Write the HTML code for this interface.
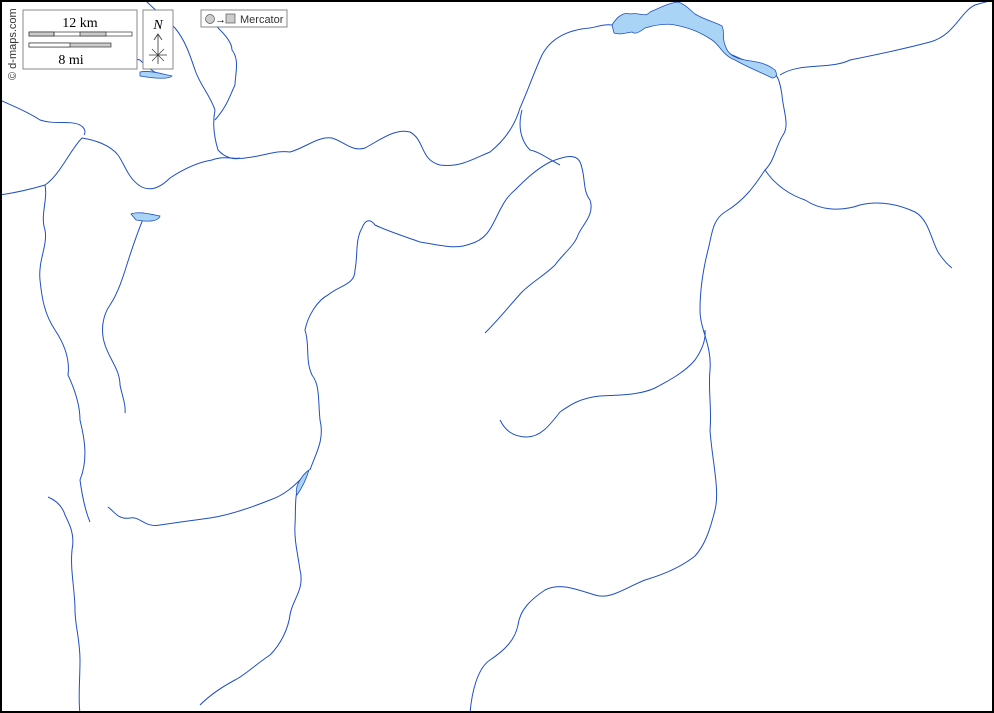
<!DOCTYPE html>
<html><head><meta charset="utf-8"><style>
html,body{margin:0;padding:0;background:#fff}
svg{display:block}
text{font-family:"Liberation Serif",serif}
</style></head><body>
<svg width="994" height="713" viewBox="0 0 994 713" xmlns="http://www.w3.org/2000/svg">
<rect x="0" y="0" width="994" height="713" fill="#fff"/>
<g fill="none" stroke="#1f4fc4" stroke-width="1" stroke-linejoin="round">
<path d="M0,195 C20,192 35,188 45,185 C60,175 70,150 82,138 C95,140 110,145 118,155 C125,165 128,178 140,186 C150,192 160,188 170,178 C185,168 200,162 212,160 C225,155 235,160 245,158 C265,156 275,150 290,152 C305,148 318,136 332,138 C345,142 352,152 365,148 C380,140 395,128 410,132 C425,140 420,160 440,165 C460,168 475,158 490,152 C505,140 515,125 520,108 C528,90 535,70 542,55 C550,40 565,30 590,28 C600,26 605,24 612,25"/>
<path d="M725,52 C740,58 755,66 770,70 C778,74 780,82 782,95 C783,110 790,125 783,135 C775,148 775,160 765,170 C755,185 745,200 725,212 C712,220 712,235 708,250 C703,270 700,290 700,310 C700,330 712,345 710,370 C708,390 712,410 710,430 C712,460 720,490 715,510 C710,530 705,545 695,556 C680,568 662,575 645,580 C625,588 610,600 595,595 C578,590 560,582 545,590 C530,600 520,610 518,625 C515,640 505,650 490,660 C478,668 472,690 470,713"/>
<path d="M780,75 C800,62 830,70 850,60 C875,55 900,50 930,42 C955,35 960,12 975,5 C985,2 990,1 994,0"/>
<path d="M765,170 C775,185 790,195 805,200 C820,210 840,212 860,205 C880,200 900,205 915,212 C930,220 932,245 940,255 C945,262 948,265 952,268"/>
<path d="M310,470 C315,455 325,440 320,420 C318,400 320,385 312,375 C305,360 310,345 305,330 C308,315 318,300 328,295 C340,285 355,285 355,270 C358,255 355,240 362,228 C365,220 370,218 375,225 C385,230 400,235 420,242 C440,245 455,250 470,244 C485,240 490,230 495,220 C500,210 505,198 515,190 C525,180 535,170 550,162 C560,158 575,152 580,162 C586,175 582,190 590,200 C595,215 582,225 578,235 C575,245 562,255 555,265 C545,275 532,282 522,292 C510,305 500,318 485,333"/>
<path d="M300,480 C294,495 296,510 295,525 C294,540 298,555 300,570 C305,590 292,600 290,615 C288,630 280,645 270,655 C255,665 245,675 235,680 C220,688 210,695 200,705"/>
<path d="M108,507 C115,512 118,520 130,518 C140,516 145,528 160,525 C180,522 195,520 210,518 C230,515 250,508 270,500 C285,495 295,485 302,478"/>
<path d="M500,420 C505,430 512,436 525,437 C540,438 550,425 560,412 C570,405 580,398 600,396 C620,395 640,395 655,388 C670,380 685,372 695,360 C702,350 706,340 705,330"/>
<path d="M145,215 C140,225 135,240 130,255 C125,270 120,290 110,305 C103,315 100,330 105,345 C110,360 120,370 120,385 C122,395 126,405 125,413"/>
<path d="M45,185 C48,200 40,215 45,230 C48,245 38,260 40,280 C42,300 45,315 55,330 C65,345 70,360 68,375 C75,390 80,405 80,420 C85,440 88,460 80,480 C82,495 85,510 90,522"/>
<path d="M48,497 C55,500 62,505 65,515 C70,525 75,535 72,550 C70,570 75,590 75,610 C75,625 80,640 80,660 C80,680 78,700 80,713"/>
<path d="M145,0 C155,10 165,18 175,28 C185,40 190,55 195,70 C200,85 210,95 215,110 C212,125 215,140 218,150 C225,158 235,160 240,158"/>
<path d="M405,0" />
<path d="M210,20 C220,30 232,40 232,50 C240,60 235,75 235,85 C230,95 228,105 215,120"/>
<path d="M0,100 C10,105 25,110 40,120 C55,125 70,120 80,125 C85,128 86,132 84,135"/>
<path d="M160,75 C150,70 145,65 140,60 C130,58 115,55 105,50"/>
<path d="M560,165 C550,160 540,152 530,150 C520,140 518,125 522,110"/>
</g>
<g fill="#a9d4f5" stroke="#1f4fc4" stroke-width="0.8">
<path d="M612,25 C618,15 625,12 630,14 C640,12 645,18 650,12 C660,8 668,3 678,2 C685,4 690,10 695,14 C705,20 715,22 722,26 C725,32 722,38 725,45 C728,55 735,58 745,60 C755,62 765,62 775,70 C778,75 776,78 772,78 C760,72 745,66 735,60 C722,55 720,45 712,40 C700,32 690,28 675,25 C665,23 655,25 645,28 C640,32 635,35 632,32 C625,33 620,35 614,33 Z"/>
<path d="M140,72 C150,70 162,74 172,76 C168,80 152,78 140,76 Z"/>
<path d="M131,214 C138,211 150,214 160,216 C158,222 148,222 136,220 Z"/>
<path d="M300,480 C303,475 306,472 309,470 C306,480 302,488 297,495 C295,490 297,485 300,480 Z"/>
</g>
<rect x="1" y="1" width="992" height="711" fill="none" stroke="#000" stroke-width="2"/>
<rect x="23" y="10" width="114" height="59" fill="#fff" stroke="#888" stroke-width="1"/>
<text x="80" y="27" font-size="14" text-anchor="middle">12 km</text>
<rect x="29" y="32" width="103" height="4" fill="#fff" stroke="#333" stroke-width="0.7"/>
<rect x="29" y="32" width="25" height="4" fill="#ccc" stroke="#333" stroke-width="0.7"/>
<rect x="80" y="32" width="26" height="4" fill="#ccc" stroke="#333" stroke-width="0.7"/>
<line x1="54" y1="32" x2="54" y2="36" stroke="#333" stroke-width="0.7"/>
<rect x="29" y="43" width="82" height="4" fill="#ccc" stroke="#333" stroke-width="0.7"/>
<rect x="29" y="43" width="41" height="4" fill="#fff" stroke="#333" stroke-width="0.7"/>
<text x="71" y="64" font-size="14" text-anchor="middle">8 mi</text>
<rect x="143" y="10" width="30" height="59" fill="#fff" stroke="#888" stroke-width="1"/>
<text x="158" y="29" font-size="14" font-style="italic" text-anchor="middle">N</text>
<line x1="158" y1="34" x2="158" y2="64" stroke="#333" stroke-width="0.8"/>
<path d="M154,40 L158,34 L162,40" fill="none" stroke="#333" stroke-width="0.8"/>
<line x1="149" y1="55" x2="167" y2="55" stroke="#333" stroke-width="0.8"/>
<line x1="152" y1="49" x2="164" y2="61" stroke="#333" stroke-width="0.6"/>
<line x1="164" y1="49" x2="152" y2="61" stroke="#333" stroke-width="0.6"/>
<rect x="201" y="10" width="86" height="17" fill="#fff" stroke="#888" stroke-width="1"/>
<circle cx="210" cy="19" r="4.5" fill="#ccc" stroke="#555" stroke-width="0.7"/>
<text x="215" y="23" font-size="11" font-family="Liberation Sans,sans-serif">→</text>
<rect x="226" y="14" width="9" height="9" fill="#ccc" stroke="#555" stroke-width="0.7"/>
<text x="240" y="23" font-size="11" style="font-family:'Liberation Sans',sans-serif" fill="#333">Mercator</text>
<text transform="translate(16,80) rotate(-90)" font-size="11" style="font-family:'Liberation Sans',sans-serif" fill="#333">© d-maps.com</text>
</svg>
</body></html>
